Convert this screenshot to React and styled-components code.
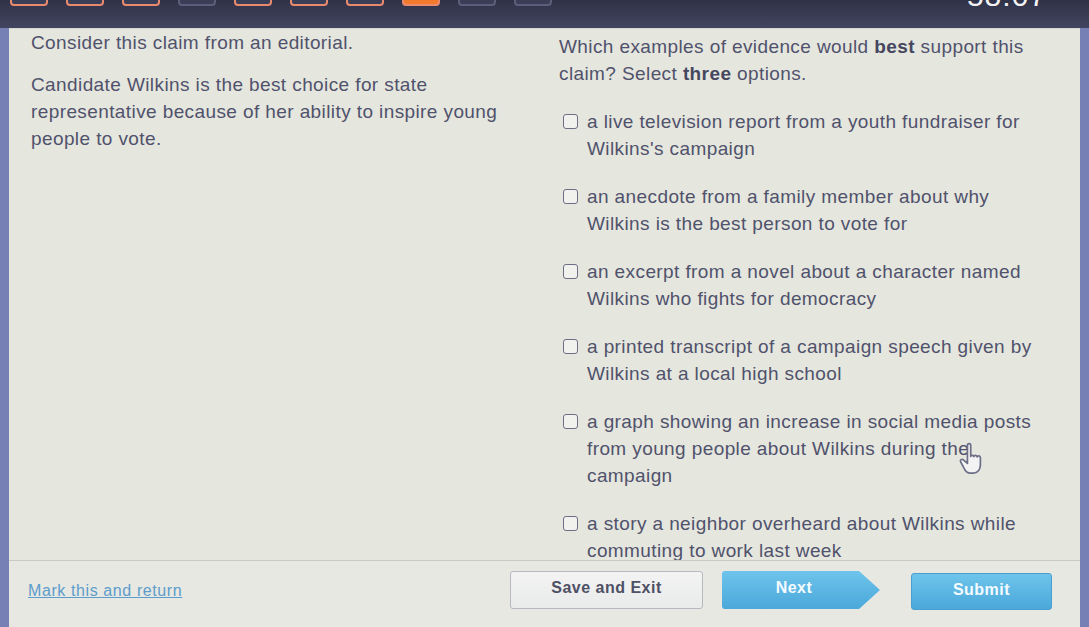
import styled, { createGlobalStyle } from "styled-components";

const GlobalStyle = createGlobalStyle`
    html, body {
        margin: 0;
        padding: 0;
        background: #353850;
    }
    * {
        box-sizing: border-box;
    }
`

const steps = ["done", "done", "done", "empty", "done", "done", "done", "current", "empty", "empty"]

const options = [
    "a live television report from a youth fundraiser for Wilkins's campaign",
    "an anecdote from a family member about why Wilkins is the best person to vote for",
    "an excerpt from a novel about a character named Wilkins who fights for democracy",
    "a printed transcript of a campaign speech given by Wilkins at a local high school",
    "a graph showing an increase in social media posts from young people about Wilkins during the campaign",
    "a story a neighbor overheard about Wilkins while commuting to work last week",
]

const App = () => {
    return (
        <Screen>
            <GlobalStyle />
            <TopBar>
                <Progress>
                    {steps.map((s, i) => (
                        <Step key={i} $state={s} />
                    ))}
                </Progress>
                <Timer>58:07</Timer>
            </TopBar>
            <Body>
                <SideStrip />
                <Panel>
                    <Content>
                        <Claim>
                            <Para>Consider this claim from an editorial.</Para>
                            <Para $gap>
                                Candidate Wilkins is the best choice for state representative because of her
                                ability to inspire young people to vote.
                            </Para>
                        </Claim>
                        <Question>
                            <Para>
                                Which examples of evidence would <b>best</b> support this claim? Select{" "}
                                <b>three</b> options.
                            </Para>
                            <OptionList>
                                {options.map((o) => (
                                    <Option key={o}>
                                        <Box />
                                        <span>{o}</span>
                                    </Option>
                                ))}
                            </OptionList>
                        </Question>
                    </Content>
                    <Footer>
                        <MarkLink href="#">Mark this and return</MarkLink>
                        <Buttons>
                            <SaveButton>Save and Exit</SaveButton>
                            <NextButton>Next</NextButton>
                            <SubmitButton>Submit</SubmitButton>
                        </Buttons>
                    </Footer>
                </Panel>
                <SideStrip />
            </Body>
            <Cursor viewBox="0 0 24 26">
                <path
                    d="M7 2.4c0-1.5 2.5-1.5 2.5 0V11c0-1.1 2.3-1.2 2.4 0.2c0-1.2 2.4-1.3 2.5 0.3c0.1-1.2 2.4-1.2 2.5 0.5v5.6c0 3-1.9 6.2-5.3 6.2H9.2c-2 0-3.2-0.9-4.3-2.8L1.8 15.2c-0.8-1.4 0.9-2.6 2.1-1.5L7 16.4z"
                    fill="#f3f3f3"
                    stroke="#6c6e88"
                    strokeWidth="1.3"
                    strokeLinejoin="round"
                />
            </Cursor>
        </Screen>
    )
}

export default App

const Screen = styled.div`
    position: relative;
    width: 1089px;
    height: 627px;
    overflow: hidden;
    display: flex;
    flex-direction: column;
    background: #353850;
    font-family: "Liberation Sans", Arial, sans-serif;
`

const TopBar = styled.div`
    height: 28px;
    flex-shrink: 0;
    display: flex;
    justify-content: space-between;
    align-items: flex-start;
    padding: 0 42px 0 10px;
    overflow: hidden;
    background: linear-gradient(#2f3247, #424560);
`

const Progress = styled.div`
    display: flex;
    gap: 18px;
`

const Step = styled.div`
    width: 38px;
    height: 30px;
    margin-top: -24px;
    border-radius: 4px;
    border: 2px solid ${(p) => (p.$state === "empty" ? "#5b5e7a" : "#e98a6e")};
    background: ${(p) => (p.$state === "current" ? "#f37a2c" : "#3a3d56")};
`

const Timer = styled.div`
    margin-top: -17px;
    font-size: 30px;
    line-height: 26px;
    letter-spacing: 1px;
    color: #f2f2f4;
`

const Body = styled.div`
    flex: 1;
    display: flex;
    min-height: 0;
`

const SideStrip = styled.div`
    width: 9px;
    flex-shrink: 0;
    background: #7680b4;
`

const Panel = styled.div`
    flex: 1;
    display: flex;
    flex-direction: column;
    background: #e5e6de;
    border-top: 1px solid #d6d7d0;
`

const Content = styled.div`
    flex: 1;
    min-height: 0;
    overflow: hidden;
    display: grid;
    grid-template-columns: 528px 478px;
    padding-left: 22px;
    font-size: 19px;
    line-height: 27px;
    letter-spacing: 0.4px;
    color: #50526c;
`

const Claim = styled.div`
    padding-right: 40px;
`

const Para = styled.p`
    margin: ${(p) => (p.$gap ? "15px" : "0")} 0 0;

    b {
        font-weight: bold;
        color: #45475f;
    }
`

const Question = styled.div`
    padding-top: 4px;
`

const OptionList = styled.div`
    display: flex;
    flex-direction: column;
    gap: 21px;
    margin-top: 21px;
`

const Option = styled.label`
    display: flex;
    align-items: flex-start;
    gap: 9px;
    padding-left: 4px;
`

const Box = styled.span`
    width: 15px;
    height: 15px;
    flex-shrink: 0;
    margin-top: 6px;
    border: 1.5px solid #6d6f86;
    border-radius: 3px;
    background: #f1f1ee;
`

const Footer = styled.div`
    height: 67px;
    flex-shrink: 0;
    display: flex;
    align-items: flex-start;
    padding: 10px 28px 0 19px;
    border-top: 1px solid #c9cac3;
    background: #e7e8e2;
`

const MarkLink = styled.a`
    margin-top: 11px;
    font-size: 16px;
    letter-spacing: 0.6px;
    color: #5d9ccb;
    text-decoration: underline;
`

const Buttons = styled.div`
    margin-left: auto;
    display: flex;
    align-items: flex-start;
`

const BaseButton = styled.button`
    height: 38px;
    font-family: "Liberation Sans", Arial, sans-serif;
    font-size: 16px;
    font-weight: bold;
    letter-spacing: 0.5px;
    border-radius: 3px;
    padding: 0 0 4px;
    cursor: pointer;
`

const SaveButton = styled(BaseButton)`
    width: 193px;
    color: #4e5065;
    background: linear-gradient(#f2f3f2, #e9eaea);
    border: 1px solid #b6b9c2;
`

const NextButton = styled(BaseButton)`
    width: 158px;
    margin-left: 19px;
    padding-right: 14px;
    color: #f4fbff;
    border: none;
    background: linear-gradient(#6ec4eb, #4aa8da);
    clip-path: polygon(0 0, 137px 0, 158px 50%, 137px 100%, 0 100%);
`

const SubmitButton = styled(BaseButton)`
    width: 141px;
    margin-left: 31px;
    margin-top: 2px;
    height: 37px;
    color: #f4fbff;
    border: 1px solid #4a9fd0;
    background: linear-gradient(#6ec4eb, #4aa8da);
`

const Cursor = styled.svg`
    position: absolute;
    left: 958px;
    top: 442px;
    width: 32px;
    height: 34px;
`
